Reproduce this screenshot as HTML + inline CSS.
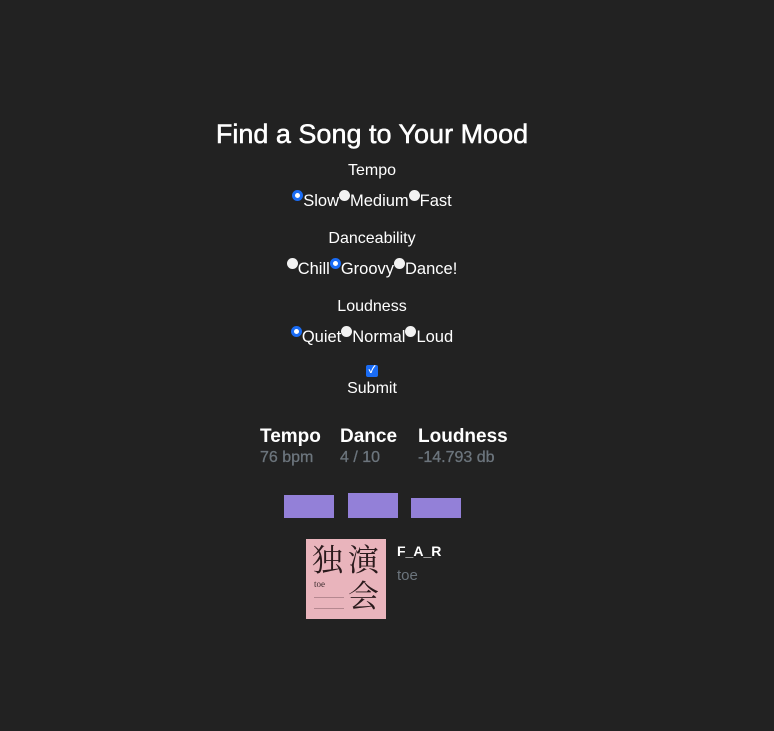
<!DOCTYPE html>
<html><head><meta charset="utf-8"><style>
body{margin:0;width:774px;height:731px;background:#222;font-family:"Liberation Sans","Noto Sans CJK JP",sans-serif;color:#fff;position:relative;overflow:hidden}
.c{position:absolute;left:0;width:744px;text-align:center}
h1{margin:0;font-size:27px;font-weight:normal;-webkit-text-stroke:0.5px #fff}
.lbl{font-size:16px;line-height:18px}
.row{font-size:16.5px;line-height:18px;white-space:nowrap}
.r{display:inline-block;width:11px;height:11px;border-radius:50%;background:#f2f2f2;vertical-align:5px;box-sizing:border-box}
.r.on{background:#fff;border:3px solid #1a6cf5}
.cb{display:inline-block;width:12px;height:12px;background:#1a6cf5;border-radius:2px;color:#fff;font-size:10px;line-height:12px;text-align:center;font-weight:bold}
.st{position:absolute;font-size:19px;font-weight:bold}
.sv{position:absolute;font-size:16px;color:#6c757d;-webkit-text-stroke:0.3px #6c757d}
.bar{position:absolute;background:#9380d8}
</style></head><body>
<div class="c" style="top:119px"><h1>Find a Song to Your Mood</h1></div>
<div class="c lbl" style="top:162px">Tempo</div>
<div class="c row" style="top:190px"><span class="r on"></span>Slow<span class="r"></span>Medium<span class="r"></span>Fast</div>
<div class="c lbl" style="top:230px">Danceability</div>
<div class="c row" style="top:258px"><span class="r"></span>Chill<span class="r on"></span>Groovy<span class="r"></span>Dance!</div>
<div class="c lbl" style="top:298px">Loudness</div>
<div class="c row" style="top:326px"><span class="r on"></span>Quiet<span class="r"></span>Normal<span class="r"></span>Loud</div>
<div class="c" style="top:360px"><span class="cb">✓</span></div>
<div class="c lbl" style="top:380px">Submit</div>
<div class="st" style="left:260px;top:426px">Tempo</div>
<div class="st" style="left:340px;top:426px">Dance</div>
<div class="st" style="left:418px;top:426px">Loudness</div>
<div class="sv" style="left:260px;top:449px">76 bpm</div>
<div class="sv" style="left:340px;top:449px">4 / 10</div>
<div class="sv" style="left:418px;top:449px">-14.793 db</div>
<div class="bar" style="left:284px;top:495px;width:50px;height:23px"></div>
<div class="bar" style="left:348px;top:493px;width:50px;height:25px"></div>
<div class="bar" style="left:411px;top:498px;width:50px;height:20px"></div>
<div style="position:absolute;left:306px;top:539px;width:80px;height:80px;background:#e9b4bc;overflow:hidden">
<div style="position:absolute;left:6px;top:2px;font-family:'Noto Serif CJK SC',serif;font-size:31px;color:#2a1a1c;line-height:34px">独</div>
<div style="position:absolute;left:42px;top:2px;font-family:'Noto Serif CJK SC',serif;font-size:31px;color:#2a1a1c;line-height:34px">演</div>
<div style="position:absolute;left:42px;top:38px;font-family:'Noto Serif CJK SC',serif;font-size:31px;color:#2a1a1c;line-height:34px">会</div>
<div style="position:absolute;left:8px;top:40px;font-family:'Liberation Serif',serif;font-size:9px;color:#3a2a2c">toe</div>
<div style="position:absolute;left:8px;top:58px;width:30px;height:10px;border-top:1px solid #b58890;border-bottom:1px solid #b58890"></div>
</div>
<div style="position:absolute;left:397px;top:543px;font-size:14px;font-weight:bold">F_A_R</div>
<div style="position:absolute;left:397px;top:567px;font-size:15px;color:#6c757d">toe</div>
</body></html>
